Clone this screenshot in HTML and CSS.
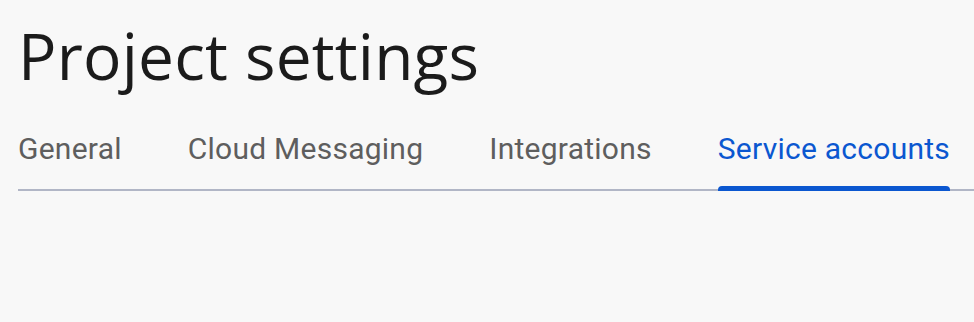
FILE: index.html
```html
<!DOCTYPE html>
<html>
<head>
<meta charset="utf-8">
<link rel="stylesheet" href="styles.css">
</head>
<body>
<div class="page">
  <h1 class="title">Project settings</h1>
  <nav class="tabs">
    <a class="tab">General</a>
    <a class="tab">Cloud Messaging</a>
    <a class="tab">Integrations</a>
    <a class="tab active">Service accounts</a>
  </nav>
</div>
</body>
</html>
```
FILE: styles.css
```css
html, body {
  margin: 0;
  padding: 0;
  background: #f8f8f8;
}
.page {
  padding: 18px 0 0 18px;
  font-family: Roboto, "Open Sans", sans-serif;
}
.title {
  margin: 0;
  font-family: "Open Sans", Roboto, sans-serif;
  font-weight: 500;
  font-size: 64px;
  line-height: 76px;
  color: #1b1b1b;
  letter-spacing: 0.2px;
}
.tabs {
  display: flex;
  gap: 66px;
  margin-top: 35px;
  border-bottom: 2px solid #b1b6c6;
}
.tab {
  position: relative;
  font-size: 30px;
  line-height: 40px;
  padding-bottom: 20px;
  color: #5e5e5e;
  letter-spacing: 0.25px;
}
.tab.active {
  color: #0b57d0;
}
.tab.active::after {
  content: "";
  position: absolute;
  left: 0;
  right: 0;
  bottom: -2px;
  height: 5px;
  background: #0b57d0;
  border-radius: 4px 4px 0 0;
}
```
